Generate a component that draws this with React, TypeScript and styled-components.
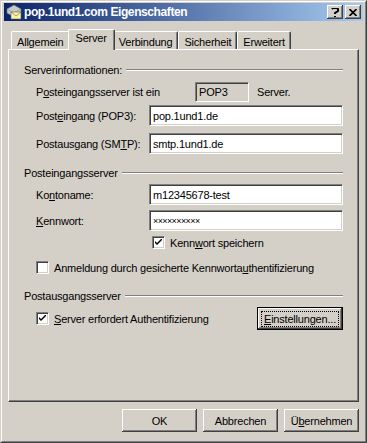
import React from "react";
import styled, { createGlobalStyle } from "styled-components";

const Global = createGlobalStyle`
  html, body { margin: 0; padding: 0; background: #d4d0c8; }
  body { font-family: "Liberation Sans", Arial, sans-serif; font-size: 11px; letter-spacing: -0.2px; color: #000; }
  * { box-sizing: border-box; }
`;

const Win = styled.div`
  width: 367px;
  height: 443px;
  background: #d4d0c8;
  border-top: 1px solid #d4d0c8;
  border-left: 1px solid #d4d0c8;
  border-right: 1px solid #404040;
  border-bottom: 1px solid #404040;
  display: flex;
  flex-direction: column;
`;

const WinInner = styled.div`
  flex: 1;
  display: flex;
  flex-direction: column;
  border-top: 1px solid #fff;
  border-left: 1px solid #fff;
  border-right: 1px solid #808080;
  border-bottom: 1px solid #808080;
  padding: 1px 2px 2px 2px;
`;

const TitleBar = styled.div`
  height: 18px;
  background: linear-gradient(to right, #0a246a, #a6caf0);
  display: flex;
  align-items: center;
  padding: 0 2px 0 2px;
  color: #fff;
  font-weight: bold;
  font-size: 12px;
  letter-spacing: -0.4px;
`;

const TitleText = styled.span`
  flex: 1;
  margin-left: 2px;
`;

const TitleBtn = styled.div<{ $gap?: number }>`
  width: 16px;
  height: 14px;
  margin-left: ${(p) => p.$gap ?? 0}px;
  background: #d4d0c8;
  box-shadow: inset -1px -1px #404040, inset 1px 1px #fff, inset -2px -2px #808080;
  color: #000;
  display: flex;
  align-items: center;
  justify-content: center;
`;

const Body = styled.div`
  flex: 1;
  display: flex;
  flex-direction: column;
  padding: 8px 4px 0 4px;
`;

const TabRow = styled.div`
  display: flex;
  align-items: flex-end;
  height: 20px;
  padding-left: 3px;
  position: relative;
  z-index: 1;
`;

const Tab = styled.div<{ $active?: boolean }>`
  height: ${(p) => (p.$active ? 21 : 18)}px;
  margin: ${(p) => (p.$active ? "0 -2px -1px -2px" : "0")};
  padding: ${(p) => (p.$active ? "2px 7px 0 7px" : "2px 5px 0 5px")};
  background: #d4d0c8;
  border-top: 1px solid #fff;
  border-left: 1px solid #fff;
  border-right: 1px solid #404040;
  box-shadow: inset -1px 0 #808080;
  border-radius: 2px 2px 0 0;
  display: flex;
  align-items: ${(p) => (p.$active ? "flex-start" : "center")};
  white-space: nowrap;
  position: relative;
  z-index: ${(p) => (p.$active ? 2 : 1)};
`;

const Panel = styled.div`
  flex: 1;
  border-top: 1px solid #fff;
  border-left: 1px solid #fff;
  border-right: 1px solid #404040;
  border-bottom: 1px solid #404040;
  box-shadow: inset -1px -1px #808080;
  display: flex;
  flex-direction: column;
  padding: 0 15px 0 15px;
`;

const GroupHeader = styled.div<{ $mt: number }>`
  display: flex;
  align-items: center;
  height: 13px;
  margin-top: ${(p) => p.$mt}px;
  gap: 4px;
`;

const GroupLine = styled.div`
  flex: 1;
  height: 2px;
  border-top: 1px solid #808080;
  border-bottom: 1px solid #fff;
`;

const Row = styled.div<{ $mt: number; $h?: number }>`
  display: flex;
  align-items: center;
  margin-top: ${(p) => p.$mt}px;
  height: ${(p) => p.$h ?? 21}px;
  padding-left: 12px;
`;

const Label = styled.span<{ $w?: number; $ml?: number }>`
  width: ${(p) => (p.$w ? `${p.$w}px` : "auto")};
  margin-left: ${(p) => p.$ml ?? 0}px;
  flex-shrink: 0;
  white-space: nowrap;
`;

const Input = styled.div<{ $ro?: boolean; $w?: number }>`
  height: 100%;
  ${(p) => (p.$w ? `width: ${p.$w}px;` : "flex: 1;")}
  background: ${(p) => (p.$ro ? "#d4d0c8" : "#fff")};
  border-top: 1px solid #808080;
  border-left: 1px solid #808080;
  border-right: 1px solid #fff;
  border-bottom: 1px solid #fff;
  box-shadow: inset 1px 1px #404040, inset -1px -1px #d4d0c8;
  display: flex;
  align-items: center;
  padding-left: 3px;
  white-space: nowrap;
`;

const Stars = styled.span`
  font-size: 9px;
  letter-spacing: -0.6px;
  padding-top: 1px;
`;

const CheckRow = styled.label<{ $mt: number; $indent: number }>`
  display: flex;
  align-items: center;
  margin-top: ${(p) => p.$mt}px;
  height: 13px;
  padding-left: ${(p) => p.$indent}px;
  gap: 5px;
  white-space: nowrap;
`;

const Box = styled.span`
  width: 13px;
  height: 13px;
  flex-shrink: 0;
  background: #fff;
  border-top: 1px solid #808080;
  border-left: 1px solid #808080;
  border-right: 1px solid #fff;
  border-bottom: 1px solid #fff;
  box-shadow: inset 1px 1px #404040, inset -1px -1px #d4d0c8;
  display: flex;
  align-items: center;
  justify-content: center;
`;

const U = styled.span`
  text-decoration: underline;
`;

const ActionRow = styled.div`
  display: flex;
  align-items: center;
  margin-top: 5px;
  height: 23px;
  padding-left: 12px;
`;

const Button = styled.div<{ $w: number; $default?: boolean }>`
  width: ${(p) => p.$w}px;
  height: 23px;
  flex-shrink: 0;
  background: #d4d0c8;
  display: flex;
  align-items: center;
  justify-content: center;
  ${(p) => (p.$default ? `border: 1px solid #000;` : "")}
  box-shadow: inset -1px -1px #404040, inset 1px 1px #fff, inset -2px -2px #808080;
`;

const Focus = styled.span`
  outline: 1px dotted #000;
  outline-offset: 1px;
  padding: 0 1px;
`;

const Footer = styled.div`
  display: flex;
  justify-content: flex-end;
  gap: 6px;
  padding: 7px 0 7px 0;
`;

const Spacer = styled.div`
  flex: 1;
`;

function Check() {
  return (
    <svg width="7" height="7" viewBox="0 0 7 7">
      <path d="M0 2 L0 4 L2 6 L7 1 L7 -1 L2 4 Z" fill="#000" />
    </svg>
  );
}

function MailIcon() {
  return (
    <svg width="16" height="16" viewBox="0 0 16 16">
      <path d="M1 5 L8 1 L15 5 L15 9 L8 13 L1 9 Z" fill="#c8c8c8" stroke="#707070" strokeWidth="0.6" />
      <path d="M1 5 L8 9 L15 5" fill="none" stroke="#909090" strokeWidth="0.6" />
      <rect x="5" y="8" width="10" height="7" fill="#fff3a0" stroke="#606060" strokeWidth="0.6" />
      <path d="M5 8 L10 12 L15 8" fill="none" stroke="#606060" strokeWidth="0.6" />
    </svg>
  );
}

export default function App() {
  return (
    <>
      <Global />
      <Win>
        <WinInner>
          <TitleBar>
            <MailIcon />
            <TitleText>pop.1und1.com Eigenschaften</TitleText>
            <TitleBtn>
              <svg width="8" height="9" viewBox="0 0 8 9">
                <path d="M1 1 L2 0 L6 0 L7 1 L7 3 L4 5 L4 6 M4 8 L4 9" stroke="#000" strokeWidth="2" fill="none" />
              </svg>
            </TitleBtn>
            <TitleBtn $gap={2}>
              <svg width="8" height="7" viewBox="0 0 8 7">
                <path d="M0.5 0 L7.5 7 M7.5 0 L0.5 7" stroke="#000" strokeWidth="1.6" />
              </svg>
            </TitleBtn>
          </TitleBar>
          <Body>
            <TabRow>
              <Tab>Allgemein</Tab>
              <Tab $active>Server</Tab>
              <Tab>Verbindung</Tab>
              <Tab>Sicherheit</Tab>
              <Tab>Erweitert</Tab>
            </TabRow>
            <Panel>
              <GroupHeader $mt={13}>
                <span>Serverinformationen:</span>
                <GroupLine />
              </GroupHeader>
              <Row $mt={6} $h={20}>
                <Label $w={159}>
                  P<U>o</U>steingangsserver ist ein
                </Label>
                <Input $ro $w={54}>POP3</Input>
                <Label $ml={8}>Server.</Label>
              </Row>
              <Row $mt={3}>
                <Label $w={113}>
                  Post<U>e</U>ingang (POP3):
                </Label>
                <Input>pop.1und1.de</Input>
              </Row>
              <Row $mt={7}>
                <Label $w={113}>
                  Postausgang (SM<U>T</U>P):
                </Label>
                <Input>smtp.1und1.de</Input>
              </Row>
              <GroupHeader $mt={12}>
                <span>Posteingangsserver</span>
                <GroupLine />
              </GroupHeader>
              <Row $mt={5}>
                <Label $w={113}>
                  Ko<U>n</U>toname:
                </Label>
                <Input>m12345678-test</Input>
              </Row>
              <Row $mt={5}>
                <Label $w={113}>
                  <U>K</U>ennwort:
                </Label>
                <Input>
                  <Stars>××××××××××</Stars>
                </Input>
              </Row>
              <CheckRow $mt={5} $indent={128}>
                <Box>
                  <Check />
                </Box>
                <span>
                  Kenn<U>w</U>ort speichern
                </span>
              </CheckRow>
              <CheckRow $mt={12} $indent={12}>
                <Box />
                <span>
                  Anmeldung durch gesicherte Kennworta<U>u</U>thentifizierung
                </span>
              </CheckRow>
              <GroupHeader $mt={15}>
                <span>Postausgangsserver</span>
                <GroupLine />
              </GroupHeader>
              <ActionRow>
                <CheckRow $mt={0} $indent={0}>
                  <Box>
                    <Check />
                  </Box>
                  <span>
                    <U>S</U>erver erfordert Authentifizierung
                  </span>
                </CheckRow>
                <Spacer />
                <Button $w={86} $default>
                  <Focus>
                    <U>E</U>instellungen...
                  </Focus>
                </Button>
              </ActionRow>
            </Panel>
            <Footer>
              <Button $w={75}>OK</Button>
              <Button $w={75}>Abbrechen</Button>
              <Button $w={75}>
                Ü<U>b</U>ernehmen
              </Button>
            </Footer>
          </Body>
        </WinInner>
      </Win>
    </>
  );
}
